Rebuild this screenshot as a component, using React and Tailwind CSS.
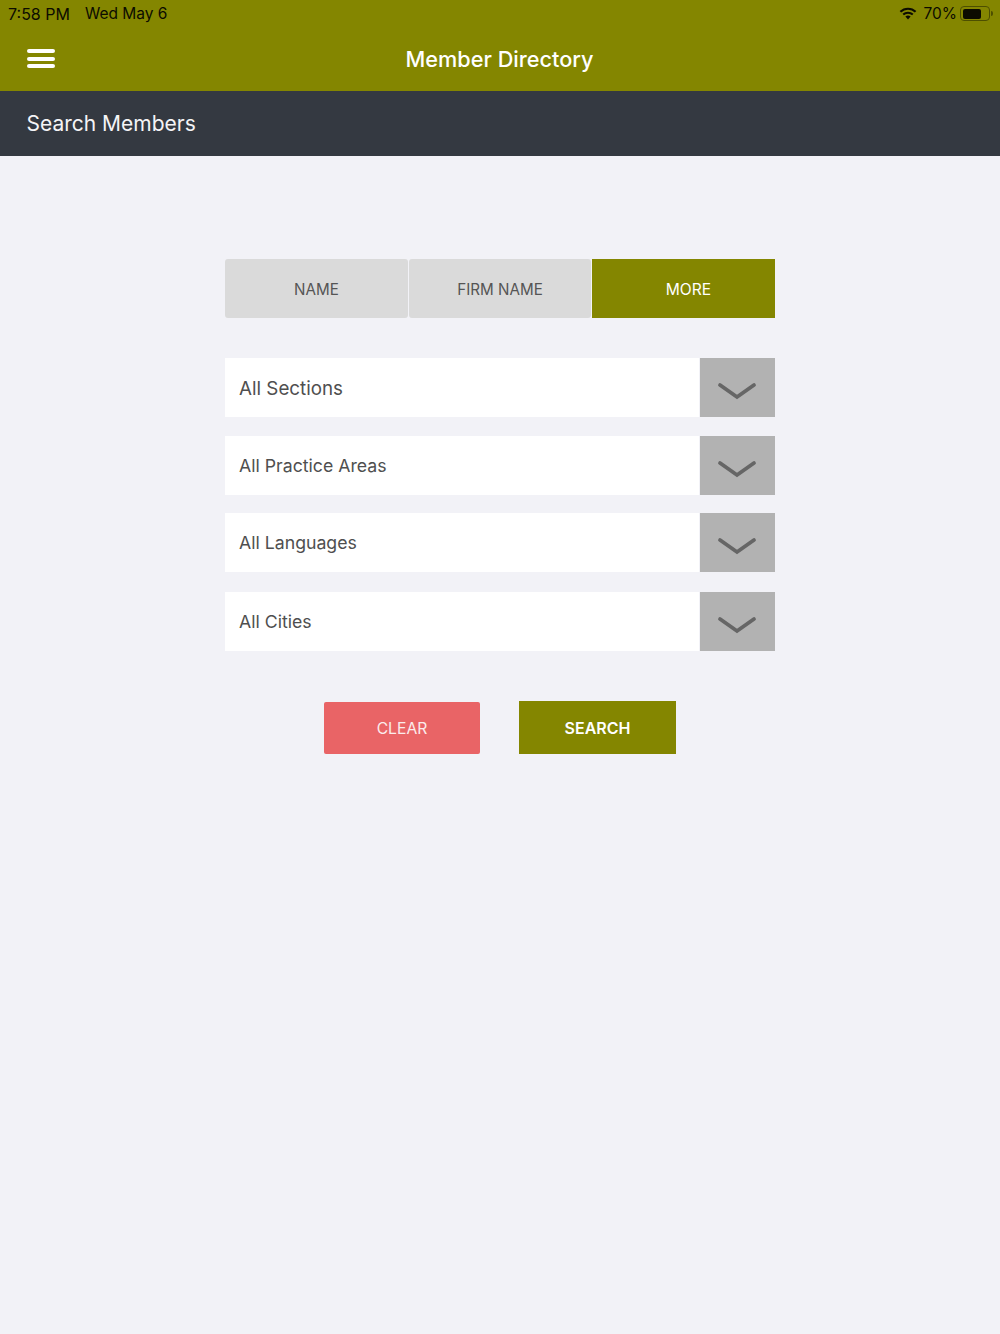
function Row({ label, size, mt }) {
  return (
    <div className={`flex h-[59px] w-[550px] ${mt}`}>
      <div className={`flex w-[474px] items-center bg-white pl-[14px] text-[#4f4f4f] ${size}`}>{label}</div>
      <div className="ml-px flex w-[75px] items-center justify-center bg-[#b2b2b2]">
        <svg width="42" height="22" viewBox="0 0 42 22" fill="none" className="mt-[8px] mr-px">
          <path d="M4 4 L21 16 L38 4" stroke="#666666" strokeWidth="3.8" strokeLinecap="round" strokeLinejoin="miter" />
        </svg>
      </div>
    </div>
  );
}

export default function App() {
  return (
    <div className="flex h-[1334px] w-[1000px] flex-col bg-[#f2f2f7] font-['Inter','Liberation_Sans',sans-serif]">
      <header className="h-[91px] bg-[#848600]">
        <div className="flex h-[27px] items-center justify-between pl-[8px] pr-[7.5px] text-[15.5px] text-[#0c0c00]">
          <div className="flex gap-[15px]">
            <span className="text-[16px]">7:58 PM</span>
            <span>Wed May 6</span>
          </div>
          <div className="flex items-center">
            <svg width="18" height="13" viewBox="0 0 18 13" className="mr-[6px]">
              <path d="M9 12.5 L6.4 9.6 A3.8 3.8 0 0 1 11.6 9.6 Z" fill="#0c0c00" />
              <path d="M4.2 7.6 A7 7 0 0 1 13.8 7.6" stroke="#0c0c00" strokeWidth="2" fill="none" />
              <path d="M1.4 4.8 A11 11 0 0 1 16.6 4.8" stroke="#0c0c00" strokeWidth="2.2" fill="none" />
            </svg>
            <span>70%</span>
            <div className="ml-[3px] flex h-[15px] w-[30px] items-center rounded-[4px] border border-[#4d4f00] p-[1.5px]">
              <div className="h-full w-[18px] rounded-[2px] bg-[#0c0c00]" />
            </div>
            <div className="ml-px h-[5px] w-[1.5px] rounded-r bg-[#4d4f00]" />
          </div>
        </div>
        <div className="flex h-[64px] items-center px-[27px]">
          <div className="mb-[1px] flex w-[28px] flex-col gap-[3.5px]">
            <div className="h-[4px] rounded-full bg-white" />
            <div className="h-[4px] rounded-full bg-white" />
            <div className="h-[4px] rounded-full bg-white" />
          </div>
          <h1 className="ml-[350px] w-[189px] whitespace-nowrap text-center text-[21.7px] font-medium text-white">Member Directory</h1>
        </div>
      </header>

      <div className="flex h-[65px] items-center bg-[#343941] pl-[26.5px] text-[21px] text-[#f4f4f6]">Search Members</div>

      <main className="flex flex-col items-center pt-[103px]">
        <div className="flex h-[59px] w-[550px] gap-px text-[15.2px]">
          <div className="flex w-[183px] items-center justify-center rounded-[3px] bg-[#dadada] pt-[3px] text-[#555555]">NAME</div>
          <div className="flex w-[182px] items-center justify-center rounded-[3px] bg-[#dadada] pt-[3px] text-[#555555]">FIRM NAME</div>
          <div className="flex w-[183px] items-center justify-center bg-[#848600] pl-[10px] pt-[2px] text-[15.6px] text-white">MORE</div>
        </div>

        <Row label="All Sections" size="pt-[4px] text-[18.8px]" mt="mt-[40px]" />
        <Row label="All Practice Areas" size="pt-[2px] text-[17.7px]" mt="mt-[19px]" />
        <Row label="All Languages" size="pt-[2px] text-[17.7px]" mt="mt-[18px]" />
        <Row label="All Cities" size="pt-[2px] text-[17.7px]" mt="mt-[20px]" />

        <div className="mt-[50px] flex items-start gap-[39px]">
          <button className="mt-px flex h-[52px] w-[156px] items-center justify-center rounded-[2px] bg-[#e96466] pt-[2px] text-[15.7px] text-[#fbecec]">CLEAR</button>
          <button className="flex h-[53px] w-[157px] items-center justify-center bg-[#848600] text-[16px] font-semibold text-white">SEARCH</button>
        </div>
      </main>
    </div>
  );
}
